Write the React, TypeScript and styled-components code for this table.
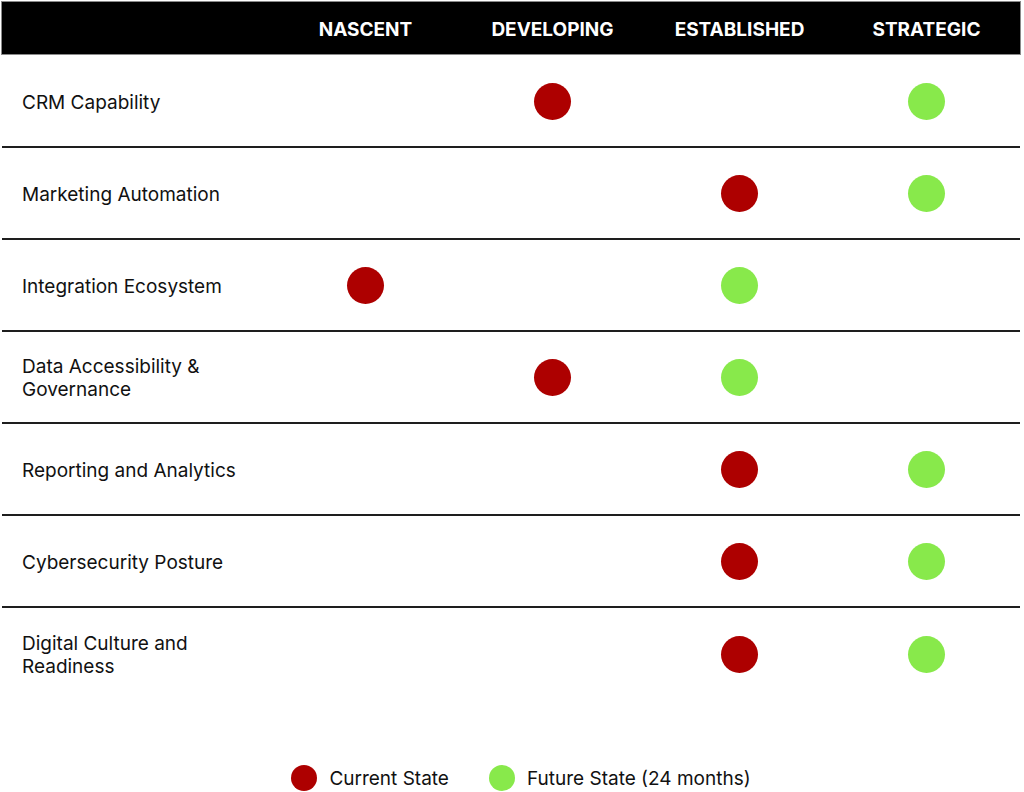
import React from "react";
import styled, { createGlobalStyle } from "styled-components";

const Global = createGlobalStyle`
  html, body { margin: 0; padding: 0; background: #ffffff; }
  body { font-family: Inter, "Noto Sans", "Liberation Sans", sans-serif; color: #111111; }
`;

const RED = "#ad0000";
const GREEN = "#88e94b";

const Page = styled.div`
  width: 1024px;
  padding-top: 2px;
  display: flex;
  flex-direction: column;
  align-items: center;
`;

const Table = styled.div`
  width: 1018px;
  margin-left: 2px;
  align-self: flex-start;
  display: flex;
  flex-direction: column;
`;

const Grid = styled.div`
  display: grid;
  grid-template-columns: 270px repeat(4, 187px);
  align-items: center;
`;

const HeaderRow = styled(Grid)`
  height: 52px;
  background: #000000;
  box-shadow: 0 0 0 1px #8a8a8a;
`;

const HeaderCell = styled.div`
  color: #ffffff;
  font-weight: 700;
  font-size: 19px;
  text-align: center;
  padding-top: 2px;
`;

const Body = styled.div`
  padding-top: 2px;
  display: flex;
  flex-direction: column;
`;

const Row = styled(Grid)<{ $last?: boolean }>`
  height: 92px;
  box-sizing: border-box;
  border-bottom: ${(p) => (p.$last ? "none" : "2px solid #1e1e1e")};
`;

const Label = styled.div`
  padding: 2px 20px 0;
  font-size: 19px;
  line-height: 23px;
  color: #111111;
`;

const Cell = styled.div`
  display: flex;
  justify-content: center;
  align-items: center;
`;

const Dot = styled.span<{ $color: string; $size: number }>`
  display: block;
  width: ${(p) => p.$size}px;
  height: ${(p) => p.$size}px;
  border-radius: 50%;
  background: ${(p) => p.$color};
`;

const Legend = styled.div`
  margin-top: 65px;
  margin-left: 18px;
  display: flex;
  align-items: center;
  gap: 40px;
`;

const LegendItem = styled.div`
  display: flex;
  align-items: center;
  gap: 12px;
  font-size: 19px;
  color: #111111;
`;

const levels = ["NASCENT", "DEVELOPING", "ESTABLISHED", "STRATEGIC"];

const rows: { label: string; current: number; future: number }[] = [
  { label: "CRM Capability", current: 1, future: 3 },
  { label: "Marketing Automation", current: 2, future: 3 },
  { label: "Integration Ecosystem", current: 0, future: 2 },
  { label: "Data Accessibility & Governance", current: 1, future: 2 },
  { label: "Reporting and Analytics", current: 2, future: 3 },
  { label: "Cybersecurity Posture", current: 2, future: 3 },
  { label: "Digital Culture and Readiness", current: 2, future: 3 },
];

export default function App() {
  return (
    <>
      <Global />
      <Page>
        <Table>
          <HeaderRow>
            <div />
            {levels.map((l) => (
              <HeaderCell key={l}>{l}</HeaderCell>
            ))}
          </HeaderRow>
          <Body>
            {rows.map((r, i) => (
              <Row key={r.label} $last={i === rows.length - 1}>
                <Label>{r.label}</Label>
                {levels.map((l, j) => (
                  <Cell key={l}>
                    {r.current === j && <Dot $color={RED} $size={37} />}
                    {r.future === j && <Dot $color={GREEN} $size={37} />}
                  </Cell>
                ))}
              </Row>
            ))}
          </Body>
        </Table>
        <Legend>
          <LegendItem>
            <Dot $color={RED} $size={26} />
            Current State
          </LegendItem>
          <LegendItem>
            <Dot $color={GREEN} $size={26} />
            Future State (24 months)
          </LegendItem>
        </Legend>
      </Page>
    </>
  );
}
